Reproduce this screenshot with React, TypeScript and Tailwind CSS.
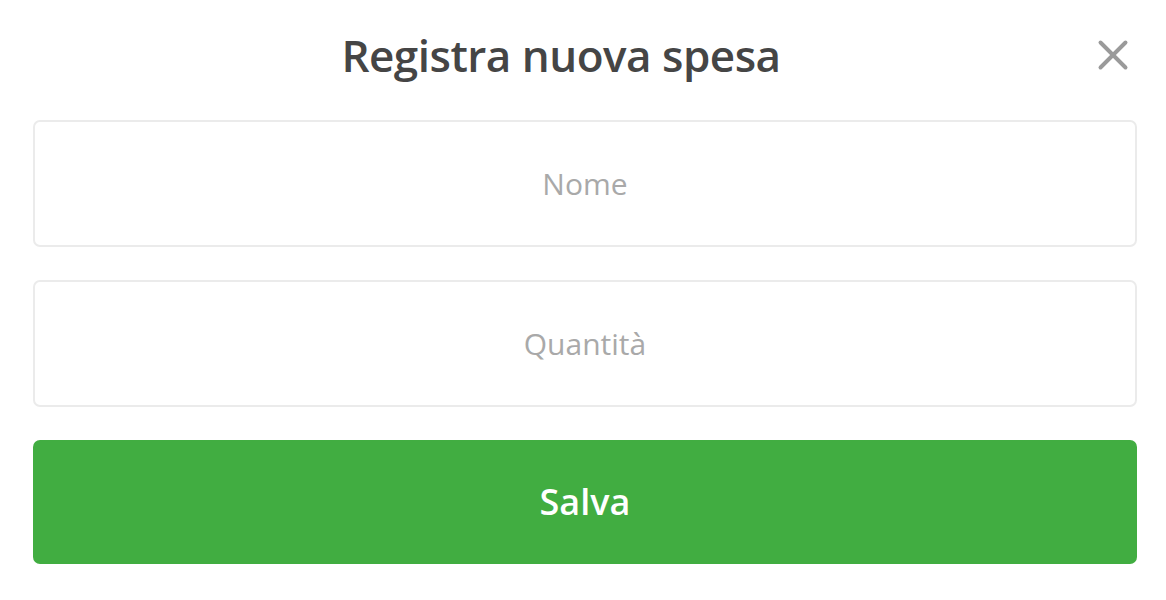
import { X } from "lucide-react"

const font = { fontFamily: '"Open Sans", "Liberation Sans", sans-serif' }

export default function App() {
  return (
    <div className="min-h-[600px] bg-white" style={font}>
      <div className="ml-[33px] mr-[29px] pt-[24px]">
        <div className="flex h-[62px] items-center">
          <h1 className="flex-1 text-center text-[44px] font-semibold leading-none tracking-[-0.5px] text-[#454545]">
            Registra nuova spesa
          </h1>
          <button className="flex h-[48px] w-[48px] items-center justify-center text-[#9a9a9a]">
            <X className="h-[50px] w-[50px] shrink-0" strokeWidth={1.9} />
          </button>
        </div>
        <div className="mt-[34px] flex flex-col gap-[33px]">
          <input
            placeholder="Nome"
            className="h-[127px] w-full rounded-[7px] border-2 border-[#ebebeb] text-center text-[30px] text-[#444] outline-none placeholder:text-[#a9a9a9]"
          />
          <input
            placeholder="Quantità"
            className="h-[127px] w-full rounded-[7px] border-2 border-[#ebebeb] text-center text-[30px] text-[#444] outline-none placeholder:text-[#a9a9a9]"
          />
          <button className="h-[124px] w-full rounded-[7px] bg-[#41ad41] text-[36px] font-semibold text-white">
            Salva
          </button>
        </div>
      </div>
    </div>
  )
}
